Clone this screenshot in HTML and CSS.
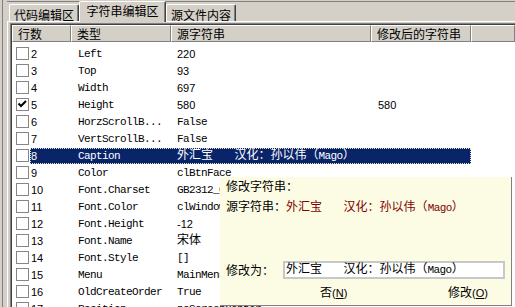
FILE: index.html
```html
<!DOCTYPE html>
<html lang="zh-CN">
<head>
  <meta charset="UTF-8" />
  <title>字符串编辑区</title>
  <link rel="stylesheet" href="styles.css">
</head>
<body>
  <div class="app">
    <div class="split"></div>
    <div class="main">
      <div class="tabs">
        <div class="tab">代码编辑区</div>
        <div class="tab on">字符串编辑区</div>
        <div class="tab">源文件内容</div>
      </div>

      <div class="page">
        <div class="list">
          <div class="head">
            <div class="hc h1">行数</div>
            <div class="hc h2">类型</div>
            <div class="hc h3">源字符串</div>
            <div class="hc h4">修改后的字符串</div>
            <div class="hc h5"></div>
          </div>

          <div class="rows">
            <div class="row"><span class="cb"></span><div class="sel"><span class="num">2</span><span class="t m">Left</span><span class="s n">220</span><span class="d"></span></div></div>
            <div class="row"><span class="cb"></span><div class="sel"><span class="num">3</span><span class="t m">Top</span><span class="s n">93</span><span class="d"></span></div></div>
            <div class="row"><span class="cb"></span><div class="sel"><span class="num">4</span><span class="t m">Width</span><span class="s n">697</span><span class="d"></span></div></div>
            <div class="row"><span class="cb"><svg width="11" height="11" viewBox="0 0 11 11"><polyline points="1.5,4.5 4,7 9,2" fill="none" stroke="#000" stroke-width="2"/></svg></span><div class="sel"><span class="num">5</span><span class="t m">Height</span><span class="s n">580</span><span class="d n">580</span></div></div>
            <div class="row"><span class="cb"></span><div class="sel"><span class="num">6</span><span class="t m">HorzScrollB...</span><span class="s m">False</span><span class="d"></span></div></div>
            <div class="row"><span class="cb"></span><div class="sel"><span class="num">7</span><span class="t m">VertScrollB...</span><span class="s m">False</span><span class="d"></span></div></div>
            <div class="row"><span class="cb"></span><div class="sel on"><span class="num">8</span><span class="t m">Caption</span><span class="s zh">外汇宝   汉化：孙以伟（<span class="m">Mago</span>）</span><span class="d"></span></div></div>
            <div class="row"><span class="cb"></span><div class="sel"><span class="num">9</span><span class="t m">Color</span><span class="s m">clBtnFace</span><span class="d"></span></div></div>
            <div class="row"><span class="cb"></span><div class="sel"><span class="num">10</span><span class="t m">Font.Charset</span><span class="s m">GB2312_CHARSET</span><span class="d"></span></div></div>
            <div class="row"><span class="cb"></span><div class="sel"><span class="num">11</span><span class="t m">Font.Color</span><span class="s m">clWindowText</span><span class="d"></span></div></div>
            <div class="row"><span class="cb"></span><div class="sel"><span class="num">12</span><span class="t m">Font.Height</span><span class="s n">-12</span><span class="d"></span></div></div>
            <div class="row"><span class="cb"></span><div class="sel"><span class="num">13</span><span class="t m">Font.Name</span><span class="s zh">宋体</span><span class="d"></span></div></div>
            <div class="row"><span class="cb"></span><div class="sel"><span class="num">14</span><span class="t m">Font.Style</span><span class="s m">[]</span><span class="d"></span></div></div>
            <div class="row"><span class="cb"></span><div class="sel"><span class="num">15</span><span class="t m">Menu</span><span class="s m">MainMenu1</span><span class="d"></span></div></div>
            <div class="row"><span class="cb"></span><div class="sel"><span class="num">16</span><span class="t m">OldCreateOrder</span><span class="s m">True</span><span class="d"></span></div></div>
            <div class="row"><span class="cb"></span><div class="sel"><span class="num">17</span><span class="t m">Position</span><span class="s m">poScreenCenter</span><span class="d"></span></div></div>
          </div>
        </div>
      </div>
    </div>
  </div>

  <!-- edit hint box, floats over the list -->
  <div class="popup">
    <div class="pl">修改字符串：</div>
    <div class="pl gap">源字符串：<span class="zh red">外汇宝   汉化：孙以伟（<span class="m">Mago</span>）</span></div>
    <div class="edit">
      <span class="lbl">修改为：</span>
      <div class="inp zh">外汇宝   汉化：孙以伟（<span class="m">Mago</span>）</div>
    </div>
    <div class="btns">
      <span class="no">否<span class="k">(<u>N</u>)</span></span>
      <span class="ok">修改<span class="k">(<u>O</u>)</span></span>
    </div>
  </div>
</body>
</html>
```

FILE: styles.css
```css
* {
  margin: 0;
  padding: 0;
  box-sizing: border-box;
}

body {
  width: 515px;
  height: 307px;
  overflow: hidden;
  position: relative;
  background: #d4d0c8;
  color: #000;
  font-family: "Liberation Sans", "Noto Sans CJK SC", sans-serif;
  font-size: 12px;
}

.app {
  display: flex;
  height: 307px;
}

.split {
  flex: none;
  width: 3px;
  border-right: 1px solid #808080;
}

.main {
  flex: 1;
  min-width: 0;
  padding-left: 4px;
  display: flex;
  flex-direction: column;
}

/* tabs */
.tabs {
  flex: none;
  display: flex;
  align-items: flex-end;
  height: 20px;
  margin-top: 1px;
  padding-left: 2px;
  border-top: 1px solid #808080;
  font-family: "Noto Sans CJK SC", sans-serif;
}

.tab {
  width: 70px;
  height: 17px;
  padding-top: 2px;
  line-height: 15px;
  text-align: center;
  background: #d4d0c8;
  border-top: 1px solid #fff;
  border-left: 1px solid #fff;
  border-right: 1px solid #404040;
  border-radius: 2px 2px 0 0;
  box-shadow: inset -1px 0 #808080;
}

.tab.on {
  width: 87px;
  height: 21px;
  padding-top: 1px;
  margin-bottom: -1px;
  position: relative;
  z-index: 1;
}

.page {
  flex: 1;
  min-height: 0;
  display: flex;
  flex-direction: column;
  padding: 1px 0 0 2px;
  border-top: 1px solid #fff;
  border-left: 1px solid #fff;
}

/* list view */
.list {
  flex: 1;
  overflow: hidden;
  background: #fff;
  padding: 1px 0 0 1px;
  border-top: 1px solid #808080;
  border-left: 1px solid #808080;
  box-shadow: inset 1px 1px #404040;
}

.head {
  display: flex;
  height: 17px;
  background: #d4d0c8;
  font-family: "Noto Sans CJK SC", sans-serif;
}

.hc {
  flex: none;
  padding-left: 5px;
  line-height: 15px;
  white-space: nowrap;
  border-top: 1px solid #fff;
  border-left: 1px solid #fff;
  border-right: 1px solid #808080;
  border-bottom: 1px solid #808080;
}

.h1 { width: 59px; }
.h2 { width: 100px; }
.h3 { width: 200px; }
.h4 { width: 100px; }
.h5 { flex: 1; }

.rows {
  padding-top: 4px;
}

.row {
  display: flex;
  height: 17px;
  line-height: 16px;
  white-space: nowrap;
}

.cb {
  flex: none;
  width: 13px;
  height: 13px;
  margin: 1px 1px 0 4px;
  border: 1px solid #868686;
  background: #fff;
}

.cb svg {
  display: block;
}

.sel {
  flex: none;
  display: flex;
  width: 441px;
  height: 16px;
}

.sel.on {
  background: #0a246a;
  color: #fff;
  outline: 1px dotted #e6e6c0;
  outline-offset: -1px;
}

.num {
  width: 41px;
  padding-left: 1px;
  font-size: 11px;
}

.t { width: 100px; padding-left: 7px; }
.s { width: 200px; padding-left: 6px; }
.d { width: 100px; padding-left: 7px; }

.m {
  font-family: "Liberation Mono", monospace;
  font-size: 11px;
  letter-spacing: -0.6px;
}

.zh {
  font-family: "Liberation Mono", "Noto Sans CJK SC", monospace;
  font-size: 12px;
  white-space: pre;
}

.n {
  font-size: 11px;
}

/* popup */
.popup {
  position: absolute;
  left: 220px;
  top: 177px;
  width: 292px;
  height: 129px;
  padding: 0 6px;
  display: flex;
  flex-direction: column;
  background: #fcfce4;
  border-right: 1px solid #808080;
  border-bottom: 1px solid #808080;
  font-family: "Noto Sans CJK SC", sans-serif;
  line-height: 18px;
}

.pl {
  height: 18px;
  white-space: nowrap;
}

.pl.gap {
  margin-top: 2px;
}

.red {
  color: #800000;
}

.edit {
  display: flex;
  align-items: center;
  height: 18px;
  margin-top: 46px;
}

.lbl {
  width: 57px;
}

.inp {
  width: 222px;
  height: 18px;
  padding-left: 1px;
  line-height: 14px;
  background: #fff;
  border: 2px solid #c8c8c8;
}

.btns {
  display: flex;
  height: 18px;
  margin-top: 4px;
}

.no {
  margin-left: 94px;
}

.ok {
  margin-left: auto;
  margin-right: 17px;
}

.k {
  font-family: "Liberation Sans", sans-serif;
  font-size: 11px;
}
```
